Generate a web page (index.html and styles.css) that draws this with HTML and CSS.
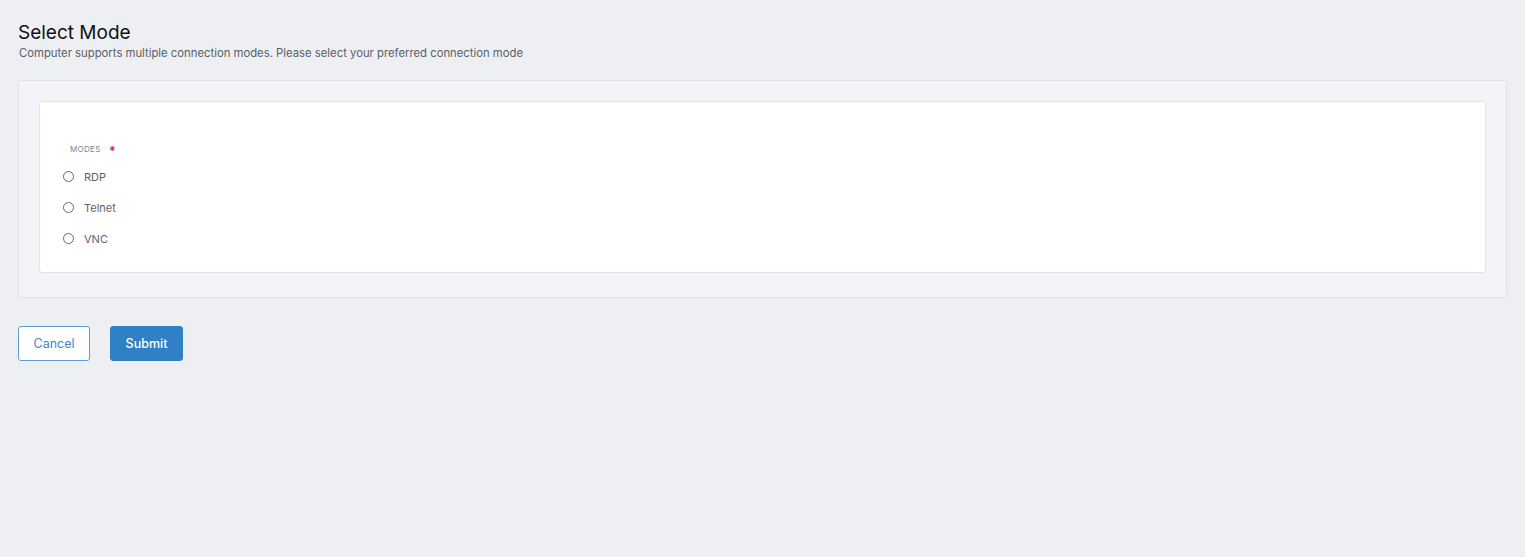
FILE: index.html
```html
<!DOCTYPE html>
<html>
<head>
<meta charset="utf-8">
<link rel="stylesheet" href="styles.css">
</head>
<body>
<div class="page">
  <h1 class="title">Select Mode</h1>
  <p class="subtitle">Computer supports multiple connection modes. Please select your preferred connection mode</p>
  <div class="outer">
    <div class="inner">
      <div class="label">MODES <span class="req">*</span></div>
      <label class="opt"><span class="radio"></span><span>RDP</span></label>
      <label class="opt"><span class="radio"></span><span>Telnet</span></label>
      <label class="opt"><span class="radio"></span><span>VNC</span></label>
    </div>
  </div>
  <div class="actions">
    <button class="btn cancel">Cancel</button>
    <button class="btn submit">Submit</button>
  </div>
</div>
</body>
</html>
```
FILE: styles.css
```css
html, body { margin: 0; padding: 0; }
body {
  background: #eeeff3;
  font-family: Inter, "Noto Sans", sans-serif;
  width: 1525px;
  height: 557px;
  overflow: hidden;
}
.page { padding: 22px 18px 0 18px; }
.title {
  margin: 0;
  font-size: 19px;
  font-weight: 400;
  color: #111;
  line-height: 22px;
}
.subtitle {
  margin: 2px 0 0 1px;
  font-size: 11.3px;
  color: #5a5f66;
  line-height: 14px;
}
.outer {
  margin-top: 20px;
  background: #f3f4f7;
  border: 1px solid #dfe1ee;
  border-radius: 3px;
  padding: 20px 20px 24px 20px;
}
.inner {
  background: #fff;
  border: 1px solid #dfe1ee;
  border-radius: 3px;
  height: 172px;
  padding: 42px 0 0 23px;
  box-sizing: border-box;
}
.label {
  font-size: 8px;
  letter-spacing: 0.3px;
  color: #7c8494;
  margin-left: 7px;
  height: 10px;
  line-height: 10px;
  margin-bottom: 7px;
}
.req {
  color: #e0263c;
  margin-left: 6px;
  font-size: 12px;
  font-weight: 700;
  vertical-align: -3px;
  line-height: 10px;
}
.opt {
  display: flex;
  align-items: center;
  height: 31px;
  font-size: 11px;
  color: #5f6266;
}
.radio {
  width: 9px;
  height: 9px;
  border: 1px solid #6b6b6b;
  border-radius: 50%;
  margin-right: 10px;
}
.actions { display: flex; gap: 20px; margin-top: 28px; }
.btn {
  font-family: inherit;
  font-size: 12.5px;
  height: 35px;
  border-radius: 3px;
  padding: 0;
  cursor: pointer;
}
.cancel {
  width: 72px;
  background: #fff;
  color: #3f86c6;
  border: 1px solid #5d9dd6;
}
.submit {
  width: 73px;
  background: #2f80c4;
  color: #fff;
  border: 1px solid #2f80c4;
  font-weight: 500;
}
```
